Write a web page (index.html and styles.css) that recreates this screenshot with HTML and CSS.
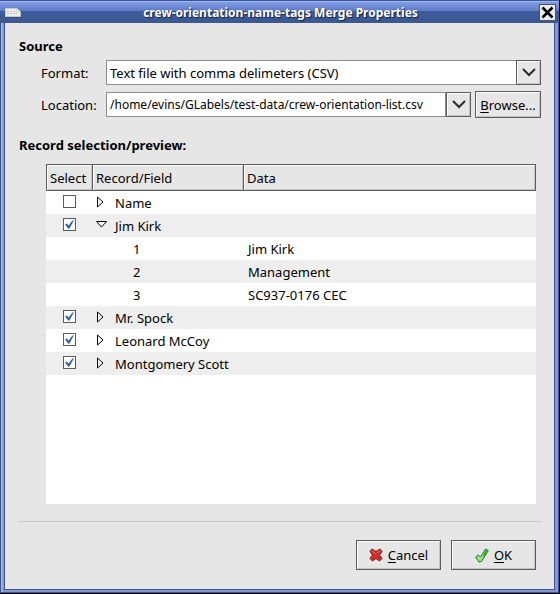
FILE: index.html
```html
<!DOCTYPE html>
<html lang="en">
<head>
<meta charset="utf-8">
<title>crew-orientation-name-tags Merge Properties</title>
<link rel="stylesheet" href="styles.css">
</head>
<body>
<div class="window">
  <header class="titlebar">
    <svg class="app-icon" width="17" height="10" viewBox="0 0 17 10" aria-hidden="true">
      <path d="M2 1.500H14L16.500 4V9.500H2Z" fill="#354a7c"/>
      <path d="M.5 .5H12L15.500 4V8.500H.5Z" fill="#ededeb" stroke="#c9c9c7"/>
      <path d="M2 3.500H11M2 5.500H12" stroke="#c4c4c4" stroke-dasharray="2 1"/>
      <path d="M12 .5V4H15.500" fill="#fff" stroke="#ccc"/>
    </svg>
    <h1 class="title">crew-orientation-name-tags Merge Properties</h1>
    <button class="close" type="button" aria-label="Close">
      <svg width="13" height="13" viewBox="0 0 13 13"><path d="M1.500 1.500L11.500 11.500M11.500 1.500L1.500 11.500" stroke="#000" stroke-width="2.500"/></svg>
    </button>
  </header>
  <main class="content">
    <h2 class="heading">Source</h2>
    <div class="fields">
      <label for="format">Format:</label>
      <div class="combo format">
        <select id="format"><option>Text file with comma delimeters (CSV)</option></select>
        <span class="arrow"><svg width="14" height="9" viewBox="0 0 14 9"><path d="M1 1L7 7L13 1" fill="none" stroke="#2b2b2b" stroke-width="2"/></svg></span>
      </div>
      <label for="location">Location:</label>
      <div class="location">
        <div class="combo path">
          <input id="location" type="text" value="/home/evins/GLabels/test-data/crew-orientation-list.csv">
          <button class="arrow" type="button" aria-label="Recent locations"><svg width="14" height="9" viewBox="0 0 14 9"><path d="M1 1L7 7L13 1" fill="none" stroke="#2b2b2b" stroke-width="2"/></svg></button>
        </div>
        <button class="button browse" type="button"><span><u>B</u>rowse...</span></button>
      </div>
    </div>
    <h2 class="heading">Record selection/preview:</h2>
    <div class="records">
      <table>
        <colgroup><col class="col-select"><col class="col-record"><col></colgroup>
        <thead><tr><th>Select</th><th>Record/Field</th><th>Data</th></tr></thead>
        <tbody>
          <tr><td class="check"><input type="checkbox" aria-label="Name"></td><td><div class="record"><svg class="expander" width="12" height="13" viewBox="0 0 12 13"><path d="M1.500 1V11L7 6Z"/></svg>Name</div></td><td></td></tr>
          <tr><td class="check"><input type="checkbox" aria-label="Jim Kirk" checked></td><td><div class="record"><svg class="expander" width="12" height="13" viewBox="0 0 12 13"><path d="M.5 2.500H10.500L5.500 8Z"/></svg>Jim Kirk</div></td><td></td></tr>
          <tr><td></td><td class="field">1</td><td>Jim Kirk</td></tr>
          <tr><td></td><td class="field">2</td><td>Management</td></tr>
          <tr><td></td><td class="field">3</td><td>SC937-0176 CEC</td></tr>
          <tr><td class="check"><input type="checkbox" aria-label="Mr. Spock" checked></td><td><div class="record"><svg class="expander" width="12" height="13" viewBox="0 0 12 13"><path d="M1.500 1V11L7 6Z"/></svg>Mr. Spock</div></td><td></td></tr>
          <tr><td class="check"><input type="checkbox" aria-label="Leonard McCoy" checked></td><td><div class="record"><svg class="expander" width="12" height="13" viewBox="0 0 12 13"><path d="M1.500 1V11L7 6Z"/></svg>Leonard McCoy</div></td><td></td></tr>
          <tr><td class="check"><input type="checkbox" aria-label="Montgomery Scott" checked></td><td><div class="record"><svg class="expander" width="12" height="13" viewBox="0 0 12 13"><path d="M1.500 1V11L7 6Z"/></svg>Montgomery Scott</div></td><td></td></tr>
        </tbody>
      </table>
    </div>
    <footer class="actions">
      <button class="button" type="button">
        <svg width="14" height="14" viewBox="0 0 14 14"><path d="M3 1L7 3.500L11 1L13 3.500L10.500 7L13 10.500L10.500 13L7 10.500L3.500 13L1 10.500L3.500 7L1 3.500Z" fill="#d92b2b" stroke="#6e2020"/><path d="M3 2.500L6.500 5.500M11 2.500L8 5" stroke="#f07a70"/></svg>
        <span><u>C</u>ancel</span>
      </button>
      <button class="button" type="button">
        <svg width="14" height="15" viewBox="0 0 14 15"><path d="M.7 9L3 7L5.500 9L10.500 1L13.300 2.500L6.500 13.500L4 14Z" fill="#8fee8a" stroke="#2d6b2b"/><path d="M11 2L12.500 3L8 10.500L8.500 6Z" fill="#18b41b"/></svg>
        <span><u>O</u>K</span>
      </button>
    </footer>
  </main>
</div>
</body>
</html>
```
FILE: styles.css
```css
* { box-sizing: border-box; }

body {
  margin: 0;
  background: #000;
  color: #000;
  font: 13px/18px "Noto Sans", "Open Sans", sans-serif;
}

button, input, select { font: inherit; color: inherit; }
h1, h2 { margin: 0; font-size: 13px; line-height: 18px; font-weight: bold; }
svg { display: block; flex: none; }
u { text-underline-offset: 2px; }

.window {
  display: flex;
  flex-direction: column;
  min-height: 100vh;
  padding: 0 4px 3px;
  border: solid #000;
  border-width: 0 1px 1px 0;
  background: linear-gradient(90deg, #3a5594 1px, #a9bbea 1px, #91a3cf 3px, transparent 3px) left / 5px 100% no-repeat, #8598cb;
  box-shadow: inset -1px -1px #3a5594;
}

.titlebar {
  display: flex;
  align-items: center;
  height: 23px;
  margin: 0 -4px;
  padding: 1px 3px 0 5px;
  border-top: 1px solid #3a5594;
  background: linear-gradient(#9db5f0 1px, #819de3 1px, #5c7ac6 10px, #3f5d9f 10px, #3c5790);
}

.title {
  flex: 1;
  font-size: 12px;
  text-align: center;
  color: #fff;
  text-shadow: 1px 1px 1px #14213f;
}

.close {
  display: grid;
  place-items: center;
  width: 17px;
  height: 17px;
  padding: 0;
  border: 1px solid #4b5366;
  background: #ebebeb;
}

.content {
  display: flex;
  flex: 1;
  flex-direction: column;
  padding: 14px 13px 19px 14px;
  border: 1px solid #3a5594;
  border-top: 0;
  background: #e6e6e6;
}

.fields {
  display: grid;
  grid-template-columns: 65px 1fr;
  align-items: center;
  gap: 6px 0;
  margin: 5px 0 18px 22px;
}

.combo {
  display: flex;
  flex: 1;
  min-width: 0;
  height: 25px;
}

.combo.format { position: relative; }

.combo input, .combo select {
  flex: 1;
  min-width: 0;
  margin: 0;
  padding: 0 3px;
  border: 1px solid #8c8c8c;
  border-radius: 0;
  outline: 0;
  background: #fff;
  appearance: none;
}

.path { font-size: 12px; }

.arrow {
  display: grid;
  place-items: center;
  width: 25px;
  padding: 0;
  border: 1px solid #5c5c5c;
  background: #e6e6e6;
  box-shadow: inset 1px 1px #fff, inset -1px -1px #c4c4c4;
}

.format .arrow {
  position: absolute;
  inset: 0 0 0 auto;
  pointer-events: none;
}

.location { display: flex; align-items: center; gap: 4px; }

.button {
  display: flex;
  align-items: center;
  justify-content: center;
  gap: 5px;
  width: 85px;
  height: 30px;
  padding: 0;
  border: 1px solid #5c5c5c;
  background: #e6e6e6;
  box-shadow: inset 1px 1px #fff, inset -1px -1px #c4c4c4;
}

.browse { width: 66px; height: 27px; }

.records {
  flex: 1;
  margin: 10px 5px 17px 27px;
  background: #fff;
}

table { width: 100%; border-collapse: separate; border-spacing: 0; table-layout: fixed; }
.col-select { width: 47px; }
.col-record { width: 151px; }

th {
  height: 27px;
  padding: 0 3px;
  border: solid #5c5c5c;
  border-width: 1px 1px 1px 0;
  background: #e6e6e6;
  box-shadow: inset 1px 1px #fff, inset -1px -1px #c4c4c4;
  font-weight: normal;
  text-align: left;
}

th:first-child { border-left-width: 1px; }

td { height: 23px; padding: 0 4px; }
tbody tr:nth-child(even) { background: #eee; }
.check { padding-bottom: 2px; }
.field { padding-left: 40px; }

.record { display: flex; align-items: center; gap: 7px; }
td:has(.record) { padding-left: 3px; }
.expander path { fill: #fff; stroke: #000; }

input[type="checkbox"] {
  display: grid;
  place-items: center;
  width: 13px;
  height: 13px;
  margin: 0 auto;
  border: 1px solid #5c5c5c;
  background: #fff;
  appearance: none;
}

input[type="checkbox"]:checked::before {
  content: "";
  width: 9px;
  height: 9px;
  background: #3a5fb0;
  clip-path: polygon(0 50%, 20% 40%, 40% 62%, 80% 8%, 100% 0, 55% 85%, 40% 100%);
}

.actions {
  display: flex;
  justify-content: flex-end;
  gap: 10px;
  padding: 18px 5px 0 0;
  border-top: 1px solid #c8c8c8;
}
```
